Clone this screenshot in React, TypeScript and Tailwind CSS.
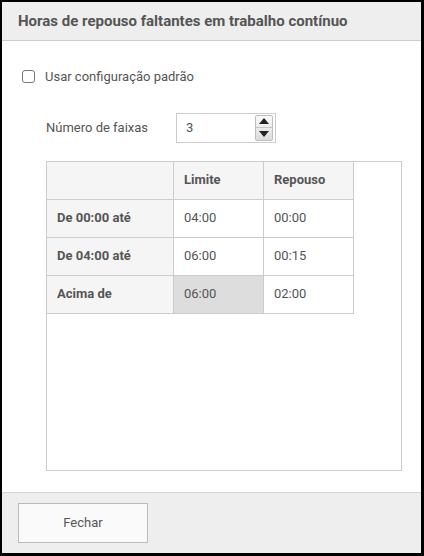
import React from "react";

const rows = [
  { label: "De 00:00 até", limite: "04:00", repouso: "00:00", locked: false },
  { label: "De 04:00 até", limite: "06:00", repouso: "00:15", locked: false },
  { label: "Acima de", limite: "06:00", repouso: "02:00", locked: true },
];

function Spinner() {
  return (
    <div className="flex h-[26px] w-[18px] flex-col overflow-hidden rounded-[2px] border border-[#bdbdbd] bg-gradient-to-b from-[#fafafa] to-[#dcdcdc]">
      <div className="flex flex-1 items-center justify-center border-b border-[#c4c4c4]">
        <svg width="10" height="6" viewBox="0 0 10 6">
          <path d="M0 6 L5 0 L10 6 Z" fill="#222" />
        </svg>
      </div>
      <div className="flex flex-1 items-center justify-center">
        <svg width="10" height="6" viewBox="0 0 10 6">
          <path d="M0 0 L10 0 L5 6 Z" fill="#222" />
        </svg>
      </div>
    </div>
  );
}

export default function App() {
  return (
    <div
      className="flex h-[556px] w-[424px] flex-col border-t-2 border-l-2 border-r-[3px] border-b-[3px] border-black bg-white text-[#555]"
      style={{ fontFamily: "Roboto, 'Liberation Sans', sans-serif" }}
    >
      {/* header */}
      <div className="flex h-[39px] items-center border-b border-[#cccccc] bg-[#eeeeee] pl-4">
        <h1 className="text-[15px] font-bold text-[#555]">
          Horas de repouso faltantes em trabalho contínuo
        </h1>
      </div>

      {/* body */}
      <div className="flex flex-1 flex-col pt-[26px] pb-[21px]">
        <label className="flex items-center pl-5 text-[13px]">
          <span className="h-[13px] w-[13px] rounded-[3px] border border-[#777] bg-white" />
          <span className="ml-[10px]">Usar configuração padrão</span>
        </label>

        <div className="mt-[26px] flex items-center pl-11">
          <span className="w-[130px] text-[13px]">Número de faixas</span>
          <div className="flex h-[30px] w-[100px] items-center justify-between border border-[#cccccc] bg-white pl-[9px] pr-[2px] text-[13px]">
            <span>3</span>
            <Spinner />
          </div>
        </div>

        <div className="mt-[18px] ml-11 mr-[19px] flex-1 border border-[#cccccc]">
          <table className="-mt-px -ml-px border-collapse text-[13px]">
            <thead>
              <tr className="h-[38px] bg-[#f5f5f5]">
                <th className="w-[127px] border border-[#cccccc]" />
                <th className="w-[90px] border border-[#cccccc] pl-[10px] text-left font-bold">Limite</th>
                <th className="w-[90px] border border-[#cccccc] pl-[10px] text-left font-bold">Repouso</th>
              </tr>
            </thead>
            <tbody>
              {rows.map((r) => (
                <tr key={r.label} className="h-[38px]">
                  <td className="border border-[#cccccc] bg-[#f5f5f5] pl-[10px] font-bold">{r.label}</td>
                  <td className={`border border-[#cccccc] pl-[10px] ${r.locked ? "bg-[#dddddd]" : "bg-white"}`}>
                    {r.limite}
                  </td>
                  <td className="border border-[#cccccc] bg-white pl-[10px]">{r.repouso}</td>
                </tr>
              ))}
            </tbody>
          </table>
        </div>
      </div>

      {/* footer */}
      <div className="flex h-[61px] items-center border-t border-[#d4d4d4] bg-[#eeeeee] pl-4">
        <button className="h-[40px] w-[130px] border border-[#bbbbbb] bg-[#fafafa] text-[13px] text-[#555]">
          Fechar
        </button>
      </div>
    </div>
  );
}
